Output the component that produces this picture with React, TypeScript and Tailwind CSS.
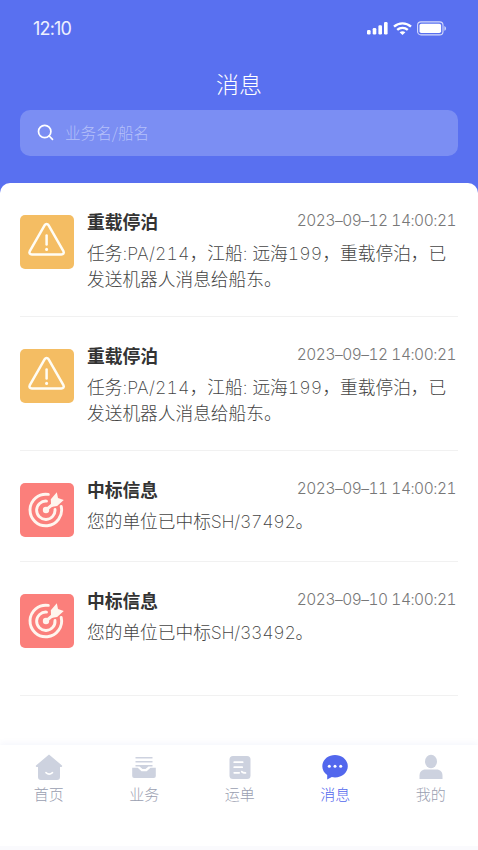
import type { ReactNode } from "react";

type Message = {
  id: number;
  kind: "warning" | "bid";
  title: string;
  time: string;
  lines: ReactNode[];
  height: string;
};

const parkingLines = [
  <>任务<Latin>:PA/214</Latin>，江船<Latin>: </Latin>远海<Latin>199</Latin>，重载停泊，已</>,
  <>发送机器人消息给船东。</>,
];

const messages: Message[] = [
  { id: 1, kind: "warning", title: "重载停泊", time: "2023–09–12 14:00:21", lines: parkingLines, height: "h-[134px]" },
  { id: 2, kind: "warning", title: "重载停泊", time: "2023–09–12 14:00:21", lines: parkingLines, height: "h-[134px]" },
  { id: 3, kind: "bid", title: "中标信息", time: "2023–09–11 14:00:21", lines: [<>您的单位已中标<Latin tight>SH/37492</Latin>。</>], height: "h-[111px]" },
  { id: 4, kind: "bid", title: "中标信息", time: "2023–09–10 14:00:21", lines: [<>您的单位已中标<Latin tight>SH/33492</Latin>。</>], height: "h-[134px]" },
];

function Latin({ children, tight }: { children: ReactNode; tight?: boolean }) {
  return (
    <span className={`font-['Inter',sans-serif] leading-none font-extralight tabular-nums ${tight ? "tracking-[-0.3px]" : "tracking-[0.1px]"}`}>
      {children}
    </span>
  );
}

function StatusBar() {
  return (
    <div className="flex h-14 items-center justify-between pl-[33px] pr-[31px]">
      <span className="font-['Inter',sans-serif] text-[18px] tracking-[-0.8px] text-white/90">12:10</span>
      <div className="flex items-center gap-[5px] text-white">
        <svg width="21" height="13" viewBox="0 0 21 13" fill="currentColor">
          <rect x="0" y="8" width="3.6" height="4.5" rx="1.2" />
          <rect x="5.7" y="6" width="3.6" height="6.5" rx="1.2" />
          <rect x="11.4" y="3.2" width="3.6" height="9.3" rx="1.2" />
          <rect x="17" y="0.1" width="3.6" height="12.4" rx="1.2" />
        </svg>
        <svg width="19" height="13" viewBox="0 0 19 13" fill="none" stroke="currentColor" strokeWidth="2.4">
          <path d="M1 4.6C5.8.3 13.2.3 18 4.6" />
          <path d="M4.2 7.9c3-2.7 7.6-2.7 10.6 0" />
          <path d="M6.6 10.2c1.7-1.4 4.1-1.4 5.8 0L9.5 13z" fill="currentColor" stroke="none" />
        </svg>
        <svg width="30" height="15" viewBox="0 0 30 15" fill="none">
          <rect x="0.6" y="0.9" width="25.4" height="13" rx="3.4" stroke="currentColor" strokeOpacity="0.75" strokeWidth="1.1" />
          <rect x="2.5" y="2.8" width="21.6" height="9.2" rx="1.8" fill="currentColor" />
          <path d="M27.4 5v4.8c1-.4 1.6-1.3 1.6-2.4s-.6-2-1.6-2.4z" fill="currentColor" fillOpacity="0.7" />
        </svg>
      </div>
    </div>
  );
}

function WarningIcon() {
  return (
    <div className="flex size-[54px] shrink-0 items-center justify-center rounded-[5px] bg-[#f4bd63]">
      <svg width="54" height="54" viewBox="0 0 54 54" fill="none" stroke="#fffdf5" strokeWidth="2.5" strokeLinecap="round" strokeLinejoin="round">
        <path d="M24.7 10.2 9.8 36.2c-1 1.8.1 3.2 2 3.2h29.6c1.9 0 3-1.4 2-3.2L28.5 10.2c-1-1.7-2.8-1.7-3.8 0z" />
        <path d="M26.6 20.5v9" />
        <path d="M26.6 34.2v.2" strokeWidth="3" />
      </svg>
    </div>
  );
}

function BidIcon() {
  return (
    <div className="flex size-[54px] shrink-0 items-center justify-center rounded-[5px] bg-[#fb7f7b]">
      <svg width="54" height="54" viewBox="0 0 54 54" fill="none" stroke="#fff5ee" strokeWidth="2.9" strokeLinecap="round">
        <path d="M28.3 11.4A15.8 15.8 0 1 0 41.2 23.4" />
        <path d="M26.5 18.1A9.2 9.2 0 1 0 35 26.5" />
        <path d="m26.5 26.5 8-6.5" />
        <circle cx="26" cy="27" r="3.2" fill="#fff5ee" stroke="none" />
        <path d="M30.8 16.3 36.8 9.3l1.2 5.6 5.8 2.2-6.7 6-5.9.8z" fill="#fff5ee" stroke="none" />
      </svg>
    </div>
  );
}

function MessageRow({ message }: { message: Message }) {
  return (
    <li className={`mx-5 flex border-b border-[#f1f1f1] pt-8 ${message.height}`}>
      {message.kind === "warning" ? <WarningIcon /> : <BidIcon />}
      <div className="ml-[13px] min-w-0 flex-1">
        <div className="-mt-[7px] flex h-[26px] items-center justify-between">
          <h2 className="text-[17.8px] font-bold text-[#333]">{message.title}</h2>
          <time className="mr-0.5 font-['Inter',sans-serif] text-[15.5px] font-light tracking-[-0.48px] whitespace-nowrap text-[#777] tabular-nums">{message.time}</time>
        </div>
        <div className="mt-[5px] text-[17.7px] leading-[26px] font-light whitespace-nowrap text-[#444]">
          {message.lines.map((line, i) => (
            <p key={i} className="h-[26px]">{line}</p>
          ))}
        </div>
      </div>
    </li>
  );
}

const tabs = [
  {
    label: "首页",
    icon: (
      <>
        <path d="M14 1.5 27 12.5c.5.8.1 1.5-.8 1.5H25v10a3 3 0 0 1-3 3H6a3 3 0 0 1-3-3V14H1.8C.9 14 .5 13.3 1 12.5z" />
        <path d="M11 19.7c1.8 1.7 4.5 1.7 6.5 0" fill="none" stroke="#fff" strokeWidth="1.7" strokeLinecap="round" />
      </>
    ),
  },
  {
    label: "业务",
    icon: (
      <>
        <path d="M5.5 4.8h17M5.5 8.8h17" fill="none" stroke="currentColor" strokeWidth="1.5" />
        <path d="M5.5 12.1h17v1.3h-4L15.5 16h-3l-3-2.6h-4z" />
        <path d="M2.2 14.8h5.5l3.8 3.4h5.2l3.8-3.4h5.3v8.3a2 2 0 0 1-2 2H4.200a2 2 0 0 1-2-2z" />
      </>
    ),
  },
  {
    label: "运单",
    icon: (
      <>
        <rect x="3.5" y="3" width="21" height="23" rx="3.5" />
        <path d="M8.2 9.2h8.5M8.2 14.2h8M8.2 19.8h5M15.8 18.5c.3 1 1.2 1.4 3.7 1.4" fill="none" stroke="#fff" strokeWidth="1.7" strokeLinecap="round" />
      </>
    ),
  },
  {
    label: "消息",
    icon: (
      <>
        <path d="M14 2C6.8 2 1.3 7 1.3 13.2c0 3.6 1.8 6.600 4.900 8.800v4.400l4.600-2.300c1 .2 2.100.3 3.200.3 7.200 0 12.800-5 12.800-11.200S21.200 2 14 2z" />
        <g fill="#fff">
          <circle cx="8.3" cy="13.3" r="1.5" />
          <circle cx="14" cy="13.3" r="1.5" />
          <circle cx="19.7" cy="13.3" r="1.5" />
        </g>
      </>
    ),
  },
  {
    label: "我的",
    icon: (
      <>
        <ellipse cx="14" cy="8.5" rx="6" ry="6.7" />
        <path d="M2.5 26v-3.500c0-3.600 2.300-6 6-6h11c3.700 0 6 2.400 6 6V26z" />
      </>
    ),
  },
];

export default function App() {
  const active = "消息";

  return (
    <div className="flex h-[850px] w-full flex-col overflow-hidden bg-[#5970f0] font-['Noto_Sans_CJK_SC',sans-serif]">
      <StatusBar />
      <h1 className="flex h-[54px] items-center justify-center text-[23px] font-light text-white">消息</h1>
      <div className="mx-5 flex h-[46px] items-center gap-[11px] rounded-[10px] bg-[#7b8ef3] pl-4">
        <svg width="18" height="18" viewBox="0 0 18 18" fill="none" stroke="#fff" strokeWidth="1.7" strokeLinecap="round">
          <circle cx="8.7" cy="7.5" r="6.2" />
          <path d="m13.2 12 3.3 3.3" />
        </svg>
        <span className="pb-px text-[15.6px] font-light text-[#b5c0f9]">业务名/船名</span>
      </div>

      <main className="mt-[27px] flex-1 rounded-t-[10px] bg-white">
        <ul>
          {messages.map((message) => (
            <MessageRow key={message.id} message={message} />
          ))}
        </ul>
      </main>

      <nav className="flex h-[105px] border-b-4 border-[#fafafd] bg-white pt-2 pl-px shadow-[0_-2px_6px_rgba(90,110,200,0.06)]">
        {tabs.map((tab) => (
          <a
            key={tab.label}
            className={`flex w-[95.5px] shrink-0 flex-col items-center ${tab.label === active ? "text-[#5267ed]" : "text-[#cdd2df]"}`}
          >
            <svg width="28" height="28" viewBox="0 0 28 28" fill="currentColor">{tab.icon}</svg>
            <span className={`text-[15px] leading-[26px] font-light ${tab.label === active ? "text-[#5267ed]" : "text-[#9a9eb0]"}`}>
              {tab.label}
            </span>
          </a>
        ))}
      </nav>
    </div>
  );
}
